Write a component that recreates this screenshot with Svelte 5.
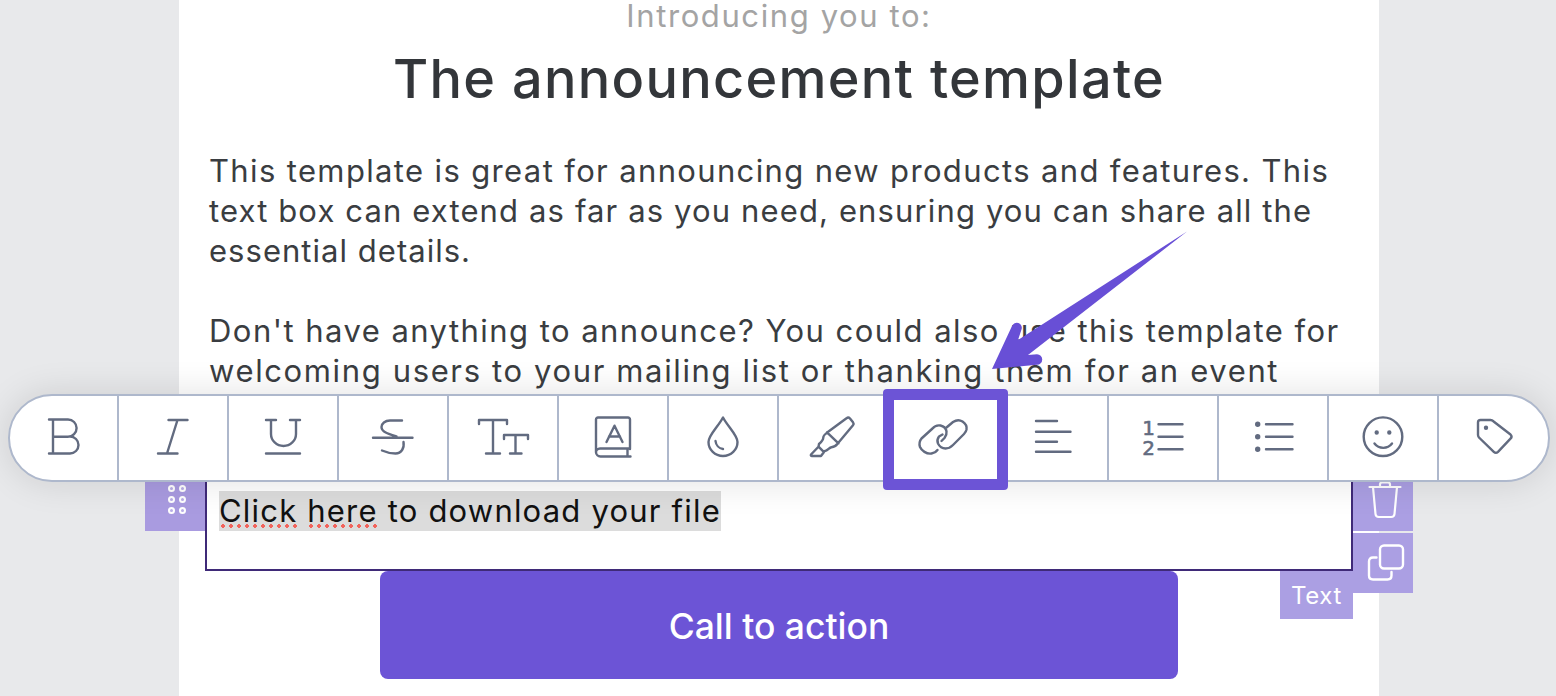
<script>
  const stroke = 2.4

  // spacing per line: the stand-in font runs narrower than the original one
  const lines = [
    { text: 'This template is great for announcing new products and features. This', spacing: 1.36 },
    { text: 'text box can extend as far as you need, ensuring you can share all the', spacing: 1.13 },
    { text: 'essential details.', spacing: 1.03 },
    { text: '\u00a0', spacing: 0 },
    { text: "Don't have anything to announce? You could also use this template for", spacing: 1.46 },
    { text: 'welcoming users to your mailing list or thanking them for an event', spacing: 1.63 },
    { text: 'attending.', spacing: 1.3 }
  ]
</script>

<div class="page">
  <div class="sheet">
    <p class="intro">Introducing you to:</p>
    <h1>The announcement template</h1>
    <div class="copy">
      {#each lines as line}
        <div style="letter-spacing: {line.spacing}px">{line.text}</div>
      {/each}
    </div>

    <div class="editor">
      <span class="mark"><span class="typo">Click</span> <span class="typo">here</span> to download your file</span>

      <div class="grip">
        {#each Array(6) as _}
          <i></i>
        {/each}
      </div>
      <div class="side trash">
        <svg width="34" height="38" viewBox="0 0 34 38" fill="none" stroke="#fff" stroke-width="2.2" stroke-linecap="round" stroke-linejoin="round">
          <path d="M1.5 6h31M12 6V3.5q0-2 2-2h6q2 0 2 2V6M5 6l2.5 27q.3 3 3.3 3h12.4q3 0 3.3-3L29 6" />
        </svg>
      </div>
      <div class="side dupe">
        <svg width="38" height="38" viewBox="0 0 38 38" fill="none" stroke="#fff" stroke-width="2.4" stroke-linejoin="round" stroke-linecap="round">
          <rect x="13" y="1.5" width="23" height="23" rx="4" />
          <path d="M9.5 13.5H6q-4 0-4 4v14q0 4 4 4h14.500q4 0 4-4V28" />
        </svg>
      </div>
      <div class="tag">Text</div>
    </div>

    <div class="cta">Call to action</div>
  </div>

  <svg class="arrow" width="215" height="150" viewBox="980 225 215 150">
    <path fill="#684fd6" d="M1187 231.500 1018 340l3.500-10.500a5 5 0 0 0-9.500-3.500L992 369l45-4.200a5 5 0 0 0 0-10.500L1028 355z" />
  </svg>

  <div class="toolbar">
    <div class="cell">
      <svg viewBox="-6 -6 60 60" width="60" height="60" fill="none" stroke="#626b80" stroke-width={stroke} stroke-linecap="round" stroke-linejoin="round">
        <path d="M9 5.500h19a8.600 8.600 0 0 1 0 17.200H13M13 5.500v34M9 39.500h21a8.500 8.500 0 0 0 0-17" />
      </svg>
    </div>
    <div class="cell">
      <svg viewBox="-6 -6 60 60" width="60" height="60" fill="none" stroke="#626b80" stroke-width={stroke} stroke-linecap="round" stroke-linejoin="round">
        <path d="M19.500 6h19M9 39.500h19.500M28.500 6 18 39.500" />
      </svg>
    </div>
    <div class="cell">
      <svg viewBox="-6 -6 60 60" width="60" height="60" fill="none" stroke="#626b80" stroke-width={stroke} stroke-linecap="round" stroke-linejoin="round">
        <path d="M7 6h10M31 6h10M12 6v14a12.500 12 0 0 0 25 0V6M7 39.500h34" />
      </svg>
    </div>
    <div class="cell">
      <svg viewBox="-6 -6 60 60" width="60" height="60" fill="none" stroke="#626b80" stroke-width={stroke} stroke-linecap="round" stroke-linejoin="round">
        <path d="M4 23.700h39.500M33 6.500H21c-5 0-8.500 3-8.500 6.500 0 5 7 7 15 9.500M34.500 28c1 6-2 11.500-8 11.500-5 0-9-1-13.500-3" />
      </svg>
    </div>
    <div class="cell">
      <svg viewBox="-6 -6 60 60" width="60" height="60" fill="none" stroke="#626b80" stroke-width={stroke} stroke-linecap="round" stroke-linejoin="round">
        <path d="M0 10V6h28v4M14 6v33.500M7 39.500h14M25 25v-4h24v4M36.500 21v18.500M31 39.500h11.500" />
      </svg>
    </div>
    <div class="cell">
      <svg viewBox="-6 -6 60 60" width="60" height="60" fill="none" stroke="#626b80" stroke-width={stroke} stroke-linecap="round" stroke-linejoin="round">
        <path d="M41 35V5.500a2 2 0 0 0-2-2H9a2 2 0 0 0-2 2V38a4.500 4.500 0 0 0 4.500 4.500h30M7 38.500a4 4 0 0 1 4-4h30M38.500 35v7.500M17.500 28l8-16.300 8 16.300M20 22.500h11" />
      </svg>
    </div>
    <div class="cell">
      <svg viewBox="-6 -6 60 60" width="60" height="60" fill="none" stroke="#626b80" stroke-width={stroke} stroke-linecap="round" stroke-linejoin="round">
        <path d="M24 3.500C19 13 9.500 21 9.500 28a14.500 14 0 0 0 29 0C38.500 21 29 13 24 3.500zM16.500 27a9 9 0 0 0 7.500 8" />
      </svg>
    </div>
    <div class="cell">
      <svg viewBox="-6 -6 60 60" width="60" height="60" fill="none" stroke="#626b80" stroke-width={stroke} stroke-linecap="round" stroke-linejoin="round">
        <path d="M37.500 4.300 18.500 18.300c-2.500 1.800-4.200 3-4.200 5.200 0 2.600-1.600 4.200-4.300 6.500l-.5 2.700 5 5 3-1.300c2-1 3-3 5-3.200 2.800-.3 4-.6 5.800-3.200L44 11.300a2.500 2.500 0 0 0 0-3L41 4.500a2.500 2.500 0 0 0-3.500-.2zM18 18.300 29.500 29.300M9.700 32.500 2 40.500c-.5 1 0 1.500 1 1.500h9l3-4" />
      </svg>
    </div>
    <div class="cell">
      <svg viewBox="-6 -6 60 60" width="60" height="60" fill="none" stroke="#626b80" stroke-width={stroke} stroke-linecap="round" stroke-linejoin="round">
        <path d="M18.500 36c-1 1.500-3 3-6 3.500-5 .8-10-3-11.500-6.500-1-3-.5-6 1.500-8.500L13.500 14.500c2-2.500 5-3.500 8-3 3 .6 5.500 3 6 6 .4 2.500-.5 4.500-2 6.500l-3 3" />
        <path d="M27.500 13.500 34 8c3-2 6.500-2.500 9.500-.5 3 2 4.500 5 4 8-.4 2-1 3-2.500 4.500L34 31c-2 2-4.500 3.500-7.500 3.500-3 0-6-2-7.500-5-1-2.500-.5-5 1-7l3.500-2" />
      </svg>
    </div>
    <div class="cell">
      <svg viewBox="-6 -6 60 60" width="60" height="60" fill="none" stroke="#626b80" stroke-width={stroke} stroke-linecap="round" stroke-linejoin="round">
        <path d="M7 7h21M7 17.700h34.500M7 27.700h21M7 37.700h34.500" />
      </svg>
    </div>
    <div class="cell">
      <svg viewBox="-6 -6 60 60" width="60" height="60" fill="none" stroke="#626b80" stroke-width={stroke} stroke-linecap="round" stroke-linejoin="round">
        <path d="M19.500 10.300h24M19.500 22.700h24M19.500 35.300h24" />
        <text class="num" x="9.500" y="21" text-anchor="middle">1</text>
        <text class="num" x="9.500" y="40.500" text-anchor="middle">2</text>
      </svg>
    </div>
    <div class="cell">
      <svg viewBox="-6 -6 60 60" width="60" height="60" fill="none" stroke="#626b80" stroke-width={stroke} stroke-linecap="round" stroke-linejoin="round">
        <path d="M17 10.300h26.500M17 22.700h26.500M17 35.300h26.500" />
        <circle cx="8.700" cy="10.300" r="1.500" fill="#626b80" />
        <circle cx="8.700" cy="22.700" r="1.500" fill="#626b80" />
        <circle cx="8.700" cy="35.300" r="1.500" fill="#626b80" />
      </svg>
    </div>
    <div class="cell">
      <svg viewBox="-6 -6 60 60" width="60" height="60" fill="none" stroke="#626b80" stroke-width={stroke} stroke-linecap="round" stroke-linejoin="round">
        <circle cx="24" cy="22.700" r="19.300" />
        <circle cx="17.700" cy="18.500" r="1" fill="#626b80" />
        <circle cx="30.300" cy="18.500" r="1" fill="#626b80" />
        <path d="M15.500 29.500a11 11 0 0 0 17.500 0" />
      </svg>
    </div>
    <div class="cell">
      <svg viewBox="-6 -6 60 60" width="60" height="60" fill="none" stroke="#626b80" stroke-width={stroke} stroke-linecap="round" stroke-linejoin="round">
        <path d="M10.500 6h10a4 4 0 0 1 2.800 1.200L40.500 20.500a3 3 0 0 1 0 4.200L28 37.800a3 3 0 0 1-4.200 0L9.500 24a4 4 0 0 1-1.500-3V8.500A2.500 2.500 0 0 1 10.500 6z" />
        <circle cx="16" cy="13.700" r="1" fill="#626b80" />
      </svg>
    </div>
    <div class="active"></div>
  </div>
</div>

<style>
  :global(body) {
    margin: 0;
    background: #e8e9eb;
    overflow: hidden;
    font-family: Inter, "Liberation Sans", sans-serif;
  }
  .page {
    position: relative;
    height: 696px;
    overflow: hidden;
  }
  .sheet {
    width: 1200px;
    height: 696px;
    margin-left: 179px;
    background: #fff;
  }
  .intro {
    margin: 0;
    height: 32px;
    line-height: 32px;
    font-size: 31px;
    letter-spacing: 1.6px;
    text-align: center;
    color: #a4a4a4;
  }
  h1 {
    margin: 16px 0 41px;
    height: 62px;
    line-height: 62px;
    font-size: 54px;
    font-weight: 500;
    letter-spacing: 1.3px;
    text-align: center;
    color: #33363a;
  }
  .copy {
    padding-left: 30px;
    height: 280px;
    font-size: 31px;
    line-height: 40px;
    white-space: nowrap;
    color: #3a3d41;
  }
  .editor {
    position: relative;
    box-sizing: border-box;
    width: 1148px;
    height: 120px;
    margin: 20px 0 0 26px;
    padding: 40px 0 0 12px;
    border: solid #3f2a78;
    border-width: 0 2px 2px 2px;
    font-size: 31px;
    line-height: 40px;
    letter-spacing: 1.2px;
    color: #111;
  }
  .mark {
    display: inline-block;
    height: 40px;
    background: #dcdcdc;
    white-space: nowrap;
  }
  .typo {
    display: inline-block;
    height: 40px;
    background: radial-gradient(circle, #f2645c 1.6px, transparent 2px) 0 33px / 8px 4px repeat-x;
  }
  .grip {
    position: absolute;
    left: -62px;
    top: 0;
    box-sizing: border-box;
    width: 60px;
    height: 80px;
    padding: 34px 0 0 23px;
    display: grid;
    grid-template-columns: repeat(2, 7px);
    grid-auto-rows: 7px;
    gap: 4px;
    background: #a99be0;
  }
  .grip i {
    border-radius: 50%;
    border: 2px solid #fff;
    background: #b9aee8;
    box-sizing: border-box;
  }
  .side {
    position: absolute;
    left: calc(100% + 2px);
    width: 60px;
    box-sizing: border-box;
    display: flex;
    align-items: center;
    justify-content: center;
    background: #ab9fe3;
  }
  .trash {
    top: 0;
    height: 80px;
    padding: 18px 0 0 4px;
  }
  .dupe {
    top: 82px;
    height: 60px;
    padding-left: 6px;
  }
  .tag {
    position: absolute;
    right: -2px;
    top: 120px;
    width: 73px;
    height: 48px;
    line-height: 50px;
    text-align: center;
    font-size: 24px;
    letter-spacing: 0.6px;
    color: #fff;
    background: #ab9fe3;
  }
  .cta {
    width: 798px;
    height: 108px;
    margin-left: 201px;
    border-radius: 8px;
    background: #6c54d6;
    color: #fff;
    font-size: 35.5px;
    font-weight: 500;
    line-height: 111px;
    text-align: center;
  }
  .arrow {
    position: absolute;
    left: 980px;
    top: 225px;
  }
  .toolbar {
    position: absolute;
    left: 8px;
    top: 394px;
    box-sizing: border-box;
    width: 1542px;
    height: 88px;
    display: flex;
    background: #fff;
    border: 2px solid #aeb8cc;
    border-radius: 44px;
    box-shadow: 0 0 36px rgba(0, 0, 0, 0.12);
  }
  .cell {
    flex: 0 0 110px;
    box-sizing: border-box;
    display: flex;
    align-items: center;
    justify-content: center;
    border-left: 2px solid #aeb8cc;
  }
  .cell:first-child {
    flex-basis: 107px;
    border-left: 0;
  }
  .cell:nth-last-child(2) {
    flex-basis: 111px;
  }
  .num {
    font-family: "DejaVu Sans", sans-serif;
    font-size: 20px;
    font-weight: 400;
    fill: #626b80;
    stroke: #626b80;
    stroke-width: 0.6;
  }
  .active {
    position: absolute;
    left: 873px;
    top: -7px;
    box-sizing: border-box;
    width: 125px;
    height: 101px;
    border: 11px solid #6c54d6;
    border-radius: 4px;
  }
</style>
